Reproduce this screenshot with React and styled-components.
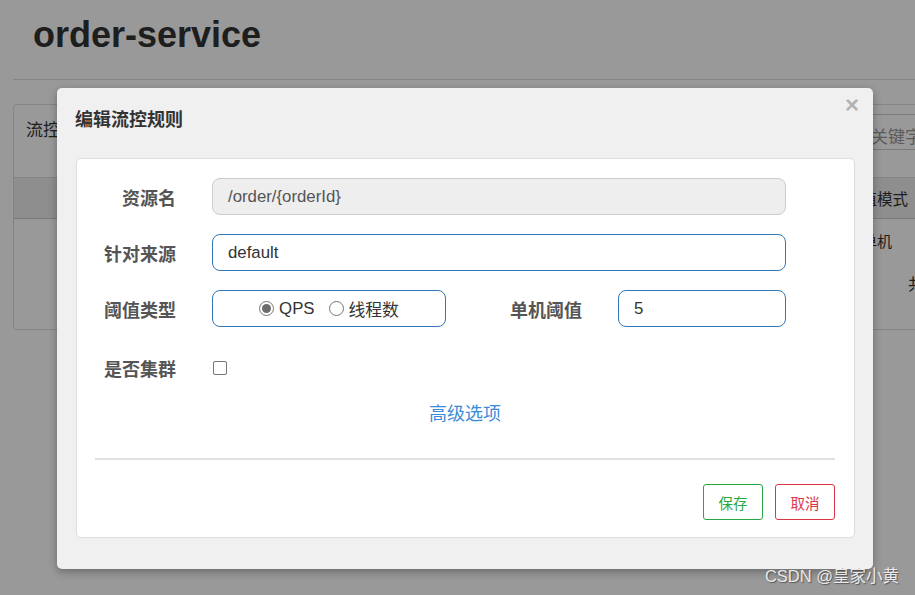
import React from 'react'
import styled, { createGlobalStyle } from 'styled-components'

const GlobalStyle = createGlobalStyle`
  html, body {
    margin: 0;
    padding: 0;
    width: 915px;
    height: 595px;
    overflow: hidden;
    background: #fff;
    font-family: "Liberation Sans", Arial, "Noto Sans CJK SC", sans-serif;
  }
  * { box-sizing: border-box; }
`

const Page = styled.div`
  position: relative;
  width: 915px;
  height: 595px;
  overflow: hidden;
`

const Header = styled.div`
  margin-left: 13px;
  width: 1000px;
  padding: 14px 20px 24px;
  border-bottom: 1px solid #dcdcdc;
`

const Title = styled.h1`
  margin: 0;
  font-size: 36px;
  line-height: 41px;
  font-weight: bold;
  color: #333;
`

const Panel = styled.div`
  margin: 24px 0 0 13px;
  width: 1000px;
  height: 226px;
  border: 1px solid #ddd;
  border-radius: 4px;
`

const PanelHead = styled.div`
  display: flex;
  align-items: flex-start;
  height: 72px;
  padding: 11px 12px 0;
  font-size: 17px;
  color: #333;
  white-space: nowrap;
`

const PanelTitle = styled.span`
  width: 80px;
  flex-shrink: 0;
`

const Search = styled.div`
  margin-left: 756px;
  margin-top: -2px;
  width: 140px;
  height: 36px;
  padding: 8px;
  border: 1px solid #ccc;
  border-radius: 4px;
  font-size: 17px;
  color: #999;
  flex-shrink: 0;
`

const TableHead = styled.div`
  display: flex;
  height: 42px;
  align-items: center;
  background: #ededed;
  border-top: 1px solid #ddd;
  border-bottom: 1px solid #ccc;
  padding-left: 832px;
  font-size: 15.5px;
  color: #333;
  white-space: nowrap;
`

const TableRow = styled.div`
  display: flex;
  height: 42px;
  align-items: center;
  padding-left: 848px;
  font-size: 15px;
  color: #333;
  white-space: nowrap;
`

const Pager = styled.div`
  padding: 10px 0 0 894px;
  font-size: 16px;
  color: #333;
  white-space: nowrap;
`

const Overlay = styled.div`
  position: absolute;
  inset: 0;
  background: rgba(0, 0, 0, 0.4);
`

const Modal = styled.div`
  position: absolute;
  top: 88px;
  left: 57px;
  width: 816px;
  height: 481px;
  background: #f0f0f0;
  border-radius: 5px;
  box-shadow: 0 3px 9px rgba(0, 0, 0, 0.3);
`

const Close = styled.span`
  position: absolute;
  top: 5px;
  right: 14px;
  font-size: 24px;
  font-weight: bold;
  line-height: 24px;
  color: #b3b3b3;
`

const ModalTitle = styled.div`
  padding: 20px 19px 26px 18px;
  font-size: 18px;
  line-height: 24px;
  font-weight: bold;
  color: #333;
`

const Card = styled.div`
  margin: 0 18px 0 19px;
  background: #fff;
  border: 1px solid #ddd;
  border-radius: 5px;
  padding: 19px 19px 17px 18px;
`

const Row = styled.div`
  display: flex;
  align-items: center;
  height: ${p => p.$h || 37}px;
  margin-right: 49px;
  margin-bottom: 19px;
  gap: 36px;
`

const Label = styled.label`
  width: ${p => p.$w || 81}px;
  flex-shrink: 0;
  text-align: right;
  font-size: 18px;
  font-weight: bold;
  color: #555;
`

const Input = styled.div`
  flex: 1;
  height: 100%;
  display: flex;
  align-items: center;
  padding-left: 15px;
  border: 1px solid ${p => (p.$disabled ? '#ccc' : '#3277b9')};
  background: ${p => (p.$disabled ? '#eee' : '#fff')};
  border-radius: 8px;
  font-size: 16.8px;
  color: ${p => (p.$disabled ? '#555' : '#333')};
`

const RadioBox = styled.div`
  width: 234px;
  height: 100%;
  display: flex;
  align-items: center;
  justify-content: center;
  gap: 14px;
  border: 1px solid #3277b9;
  border-radius: 8px;
  font-size: 16.8px;
  color: #333;
`

const RadioItem = styled.span`
  display: flex;
  align-items: center;
  gap: 5px;
`

const Radio = styled.span`
  width: 15px;
  height: 15px;
  border-radius: 50%;
  border: 1px solid #767676;
  display: flex;
  align-items: center;
  justify-content: center;
  &::after {
    content: '';
    width: 9px;
    height: 9px;
    border-radius: 50%;
    background: ${p => (p.$checked ? '#6d6d6d' : 'transparent')};
  }
`

const Checkbox = styled.span`
  width: 14px;
  height: 14px;
  margin-left: 1px;
  border: 1px solid #767676;
  border-radius: 2px;
`

const Advanced = styled.div`
  margin-top: -7px;
  text-align: center;
  font-size: 18px;
  line-height: 24px;
  color: #3a8bd8;
`

const Divider = styled.div`
  margin-top: 32px;
  height: 2px;
  background: #e2e2e2;
`

const Footer = styled.div`
  display: flex;
  justify-content: flex-end;
  gap: 12px;
  margin-top: 24px;
`

const Button = styled.button`
  width: 60px;
  height: 36px;
  padding: 0;
  background: #fff;
  border: 1px solid ${p => p.$color};
  border-radius: 3px;
  color: ${p => p.$color};
  font-family: inherit;
  font-size: 14.5px;
`

const Watermark = styled.div`
  position: absolute;
  right: 16px;
  bottom: 8px;
  font-size: 16.5px;
  color: rgba(255, 255, 255, 0.85);
  text-shadow: 1px 1px 1px rgba(60, 60, 60, 0.7);
  white-space: nowrap;
`

export default function App() {
  return (
    <Page>
      <GlobalStyle />
      <Header>
        <Title>order-service</Title>
      </Header>
      <Panel>
        <PanelHead>
          <PanelTitle>流控规则</PanelTitle>
          <Search>关键字</Search>
        </PanelHead>
        <TableHead>阈值模式</TableHead>
        <TableRow>单机</TableRow>
        <Pager>共 1 条记录</Pager>
      </Panel>

      <Overlay />
      <Modal>
        <Close>×</Close>
        <ModalTitle>编辑流控规则</ModalTitle>
        <Card>
          <Row>
            <Label>资源名</Label>
            <Input $disabled>/order/{'{orderId}'}</Input>
          </Row>
          <Row>
            <Label>针对来源</Label>
            <Input>default</Input>
          </Row>
          <Row>
            <Label>阈值类型</Label>
            <RadioBox>
              <RadioItem><Radio $checked />QPS</RadioItem>
              <RadioItem><Radio />线程数</RadioItem>
            </RadioBox>
            <Label $w={100}>单机阈值</Label>
            <Input>5</Input>
          </Row>
          <Row $h={44}>
            <Label>是否集群</Label>
            <Checkbox />
          </Row>
          <Advanced>高级选项</Advanced>
          <Divider />
          <Footer>
            <Button $color="#28a745">保存</Button>
            <Button $color="#dc3545">取消</Button>
          </Footer>
        </Card>
      </Modal>
      <Watermark>CSDN @皇家小黄</Watermark>
    </Page>
  )
}
